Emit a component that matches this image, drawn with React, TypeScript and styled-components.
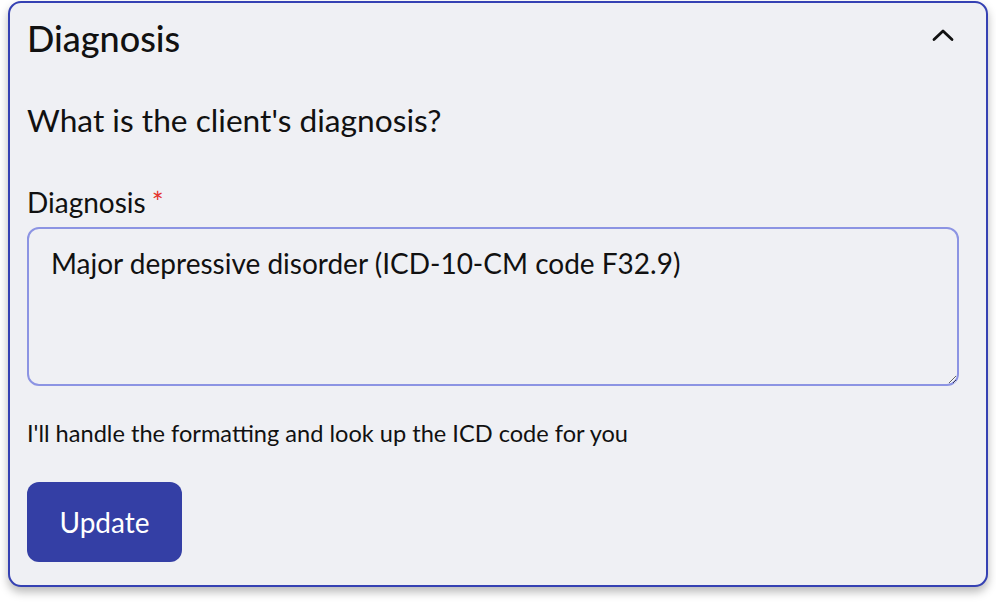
import styled, { createGlobalStyle } from "styled-components";

const GlobalStyle = createGlobalStyle`
  body {
    margin: 0;
    background: #ffffff;
    font-family: Lato, "Open Sans", sans-serif;
  }
`;

const App = () => {
  return (
    <>
      <GlobalStyle />
      <Page>
        <Card>
          <Header>
            <Title>Diagnosis</Title>
            <Toggle aria-label="Collapse">
              <svg width="22" height="14" viewBox="0 0 22 14" fill="none">
                <path
                  d="M2 11.5 L11 3 L20 11.5"
                  stroke="#111111"
                  strokeWidth="2.8"
                  strokeLinecap="round"
                  strokeLinejoin="round"
                />
              </svg>
            </Toggle>
          </Header>
          <Question>What is the client's diagnosis?</Question>
          <Label>
            Diagnosis<Required>*</Required>
          </Label>
          <TextArea defaultValue="Major depressive disorder (ICD-10-CM code F32.9)" />
          <Hint>I'll handle the formatting and look up the ICD code for you</Hint>
          <Button>Update</Button>
        </Card>
      </Page>
    </>
  );
};

export default App;

const Page = styled.div`
  padding: 1px 8px 17px 8px;
`;

const Card = styled.div`
  display: flex;
  flex-direction: column;
  align-items: flex-start;
  width: 980px;
  height: 586px;
  box-sizing: border-box;
  padding: 14px 27px 22px 17px;
  background: #eff0f4;
  border: 2px solid #3541b3;
  border-radius: 13px;
  box-shadow: 0px 5px 10px rgba(0, 0, 0, 0.28);
`;

const Header = styled.div`
  display: flex;
  justify-content: space-between;
  align-items: center;
  width: 100%;
  height: 43px;
`;

const Title = styled.div`
  font-size: 36px;
  line-height: 43px;
  font-weight: 500;
  color: #111111;
`;

const Toggle = styled.div`
  display: flex;
  align-items: center;
  justify-content: center;
  width: 22px;
  height: 14px;
  margin-right: 5px;
  margin-top: -8px;
  cursor: pointer;
`;

const Question = styled.div`
  margin-top: 41px;
  font-size: 31.7px;
  line-height: 38px;
  color: #111111;
`;

const Label = styled.div`
  margin-top: 46px;
  font-size: 28px;
  line-height: 34px;
  color: #111111;
`;

const Required = styled.span`
  color: #e4322b;
  margin-left: 6px;
`;

const TextArea = styled.textarea`
  width: 100%;
  height: 159px;
  box-sizing: border-box;
  margin-top: 8px;
  padding: 17px 22px;
  font-family: Lato, "Open Sans", sans-serif;
  font-size: 28px;
  color: #111111;
  background: #eff0f4;
  border: 2px solid #8c94e3;
  border-radius: 12px;
  outline: none;
  resize: vertical;
`;

const Hint = styled.div`
  margin-top: 33px;
  font-size: 23.6px;
  line-height: 29px;
  color: #111111;
`;

const Button = styled.button`
  margin-top: 34px;
  width: 155px;
  height: 80px;
  font-family: Lato, "Open Sans", sans-serif;
  font-size: 28px;
  color: #ffffff;
  background: #343fa5;
  border: 0;
  border-radius: 12px;
  cursor: pointer;
`;
